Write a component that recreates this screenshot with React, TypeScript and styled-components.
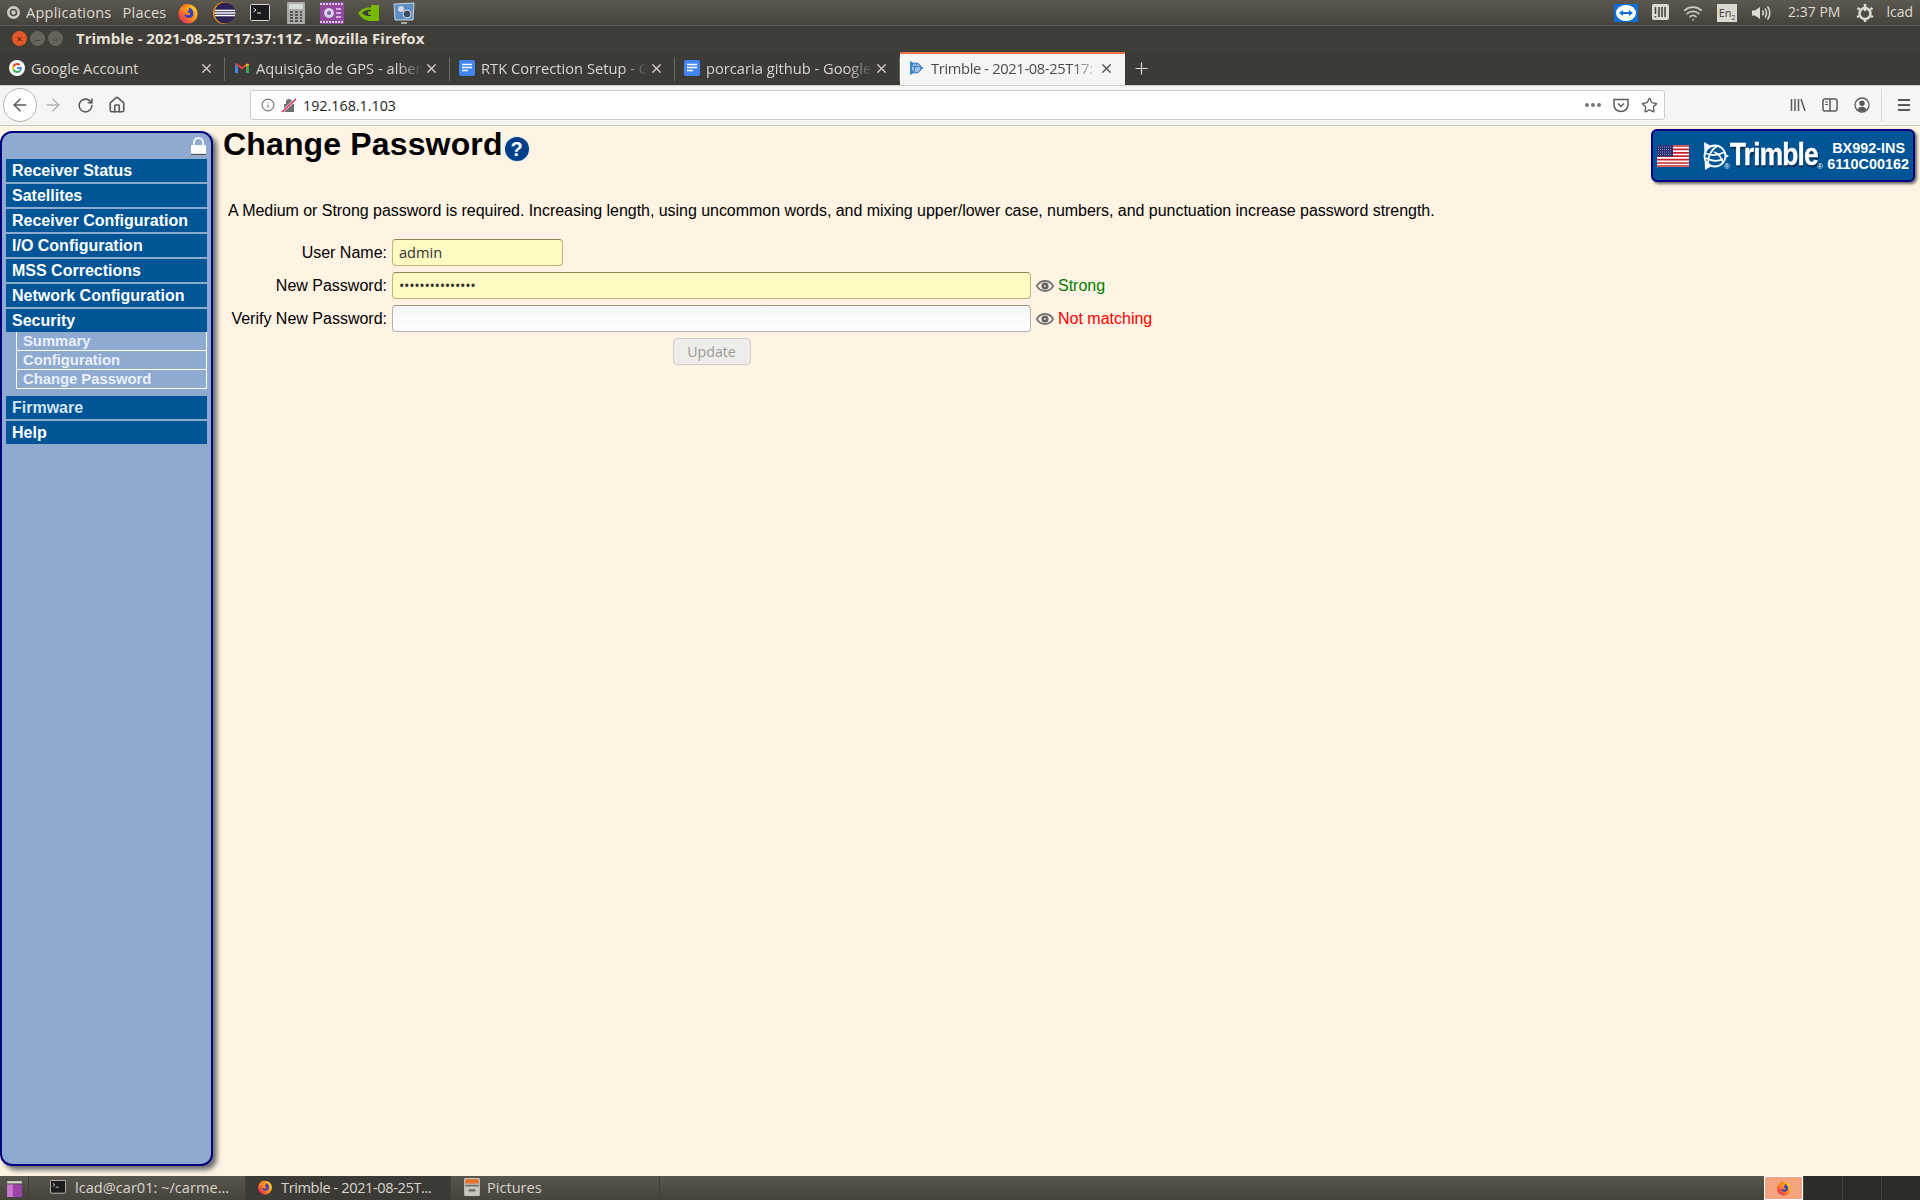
import React from "react";
import styled, { createGlobalStyle } from "styled-components";
import { ArrowLeft, ArrowRight, Home, Info, Plus, RotateCw, Star, Wifi, X } from "lucide-react";

const GlobalStyle = createGlobalStyle`
  html, body { margin: 0; padding: 0; }
  body { background: #fff3e3; overflow: hidden; }
  * { box-sizing: border-box; }
`;

const UI_FONT = `"Open Sans", "Noto Sans", sans-serif`;
const WEB_FONT = `"Liberation Sans", Arial, sans-serif`;

const Screen = styled.div`
  width: 1920px;
  height: 1200px;
  display: flex;
  flex-direction: column;
  overflow: hidden;
  font-family: ${UI_FONT};
`;

/* desktop top panel */
const TopPanel = styled.div`
  height: 26px;
  flex: none;
  display: flex;
  align-items: center;
  justify-content: space-between;
  padding: 0 7px;
  background: linear-gradient(#5c5850, #45433d);
  border-bottom: 1px solid #5e5c56;
  color: #dfdbd2;
  font-size: 14.6px;
`;

const PanelGroup = styled.div`
  display: flex;
  align-items: center;
`;

const PanelMenu = styled.span<{ $left: number }>`
  margin: 0 0 2px ${(p) => p.$left}px;
  letter-spacing: 0.2px;
`;

const Launchers = styled.div`
  display: flex;
  align-items: center;
  margin-left: 4px;
`;

const LauncherSlot = styled.span`
  width: 36px;
  display: flex;
  justify-content: center;
  align-items: center;
`;

const Tray = styled.div`
  display: flex;
  align-items: center;
  gap: 14px;
`;

const Clock = styled.span`
  margin: 0 1px 2px 3px;
  font-size: 14px;
  white-space: nowrap;
`;

const UserName = styled.span`
  margin: 0 0 2px -3px;
  font-size: 14px;
`;

/* firefox window */
const TitleBar = styled.div`
  height: 26px;
  flex: none;
  display: flex;
  align-items: center;
  padding: 0 0 2px 12px;
  background: #3f3d38;
  color: #e6e2d9;
  font-size: 15px;
  font-weight: 700;
`;

const WindowDots = styled.div`
  display: flex;
  gap: 3px;
  margin-right: 13px;
`;

const WindowDot = styled.span<{ $close?: boolean }>`
  width: 15px;
  height: 15px;
  border-radius: 50%;
  display: flex;
  align-items: center;
  justify-content: center;
  background: ${(p) => (p.$close ? "#e2572b" : "#65635c")};
  color: ${(p) => (p.$close ? "#5d2010" : "#3b3a35")};
  font-size: 11px;
  line-height: 1;
  font-weight: 400;
`;

const TabStrip = styled.div`
  height: 33px;
  flex: none;
  display: flex;
  background: #3c3b37;
`;

const Tab = styled.div<{ $active?: boolean }>`
  width: 225px;
  flex: none;
  display: flex;
  align-items: center;
  padding: ${(p) => (p.$active ? "0 11px 3px 9px" : "0 11px 1px 9px")};
  color: ${(p) => (p.$active ? "#4a4a4a" : "#d8d5cd")};
  background: ${(p) => (p.$active ? "#f5f5f4" : "transparent")};
  border-top: ${(p) => (p.$active ? "2px solid #f0704c" : "none")};
  font-size: 14.7px;
  position: relative;
  &::after {
    content: "";
    display: ${(p) => (p.$active ? "none" : "block")};
    position: absolute;
    right: 0;
    top: 5px;
    bottom: 4px;
    width: 1px;
    background: #6a6964;
  }
  & > svg {
    flex: none;
  }
`;

const TabTitle = styled.span<{ $fade?: boolean; $tight?: boolean }>`
  flex: 1;
  min-width: 0;
  margin-left: 6px;
  white-space: nowrap;
  overflow: hidden;
  letter-spacing: ${(p) => (p.$tight ? "-0.35px" : "0")};
  ${(p) =>
    p.$fade
      ? "mask-image: linear-gradient(to right, #000 85%, transparent 100%); -webkit-mask-image: linear-gradient(to right, #000 85%, transparent 100%);"
      : ""}
`;

const TabClose = styled.span`
  width: 16px;
  display: flex;
  justify-content: center;
  flex: none;
`;

const NewTab = styled.div`
  width: 32px;
  display: flex;
  align-items: center;
  justify-content: center;
  color: #e0ddd6;
`;

const Toolbar = styled.div`
  height: 41px;
  flex: none;
  display: flex;
  align-items: center;
  padding: 0 0 1px 3px;
  background: #f5f5f4;
  border-top: 1px solid #cfcfce;
  border-bottom: 1px solid #c9c8c6;
  color: #5a5a5a;
`;

const BackButton = styled.div`
  width: 34px;
  height: 34px;
  flex: none;
  display: flex;
  align-items: center;
  justify-content: center;
  border-radius: 50%;
  background: #fff;
  border: 1px solid #b3b3b3;
`;

const NavButton = styled.div<{ $dim?: boolean }>`
  width: 32px;
  flex: none;
  display: flex;
  justify-content: center;
  color: ${(p) => (p.$dim ? "#b4b4b4" : "#5a5a5a")};
`;

const UrlBar = styled.div`
  width: 1415px;
  height: 30px;
  margin-left: 117px;
  flex: none;
  display: flex;
  align-items: center;
  gap: 6px;
  padding: 0 6px 0 10px;
  background: #fff;
  border: 1px solid #cccccb;
  border-radius: 3px;
`;

const Address = styled.span`
  flex: 1;
  color: #1e1e1e;
  font-size: 14.3px;
`;

const UrlActions = styled.div`
  display: flex;
  align-items: center;
  gap: 12px;
`;

const MoreDots = styled.span`
  display: flex;
  gap: 2px;
  & > i {
    width: 4px;
    height: 4px;
    border-radius: 50%;
    background: #777;
  }
`;

const ToolActions = styled.div`
  display: flex;
  align-items: center;
  gap: 16px;
  margin-left: 125px;
`;

const ToolDivider = styled.span`
  width: 1px;
  height: 33px;
  background: #dcdcdb;
  margin: 0 -2px 0 -5px;
`;

/* receiver web page */
const PageBody = styled.div`
  flex: 1;
  min-height: 0;
  display: flex;
  background: #fff3e3;
  font-family: ${WEB_FONT};
  color: #000;
`;

const Sidebar = styled.nav`
  width: 213px;
  height: 1035px;
  margin-top: 5px;
  flex: none;
  padding: 0 4px;
  background: #8faad1;
  border: 2px solid #000080;
  border-radius: 12px;
  box-shadow: 4px 4px 5px #6e6e6e;
  display: flex;
  flex-direction: column;
`;

const LockRow = styled.div`
  height: 26px;
  flex: none;
  display: flex;
  justify-content: flex-end;
  align-items: flex-end;
  padding: 0 1px 4px 0;
`;

const MenuList = styled.div`
  display: flex;
  flex-direction: column;
  gap: 2px;
`;

const MenuItem = styled.div<{ $tint?: boolean }>`
  height: 23px;
  line-height: 23px;
  padding-left: 6px;
  background: #005596;
  color: ${(p) => (p.$tint ? "#d4e6f6" : "#fff")};
  font-size: 16px;
  font-weight: 700;
  white-space: nowrap;
`;

const SubMenu = styled.div`
  margin: -2px 0 5px 10px;
  border-left: 1px solid #fff;
  border-right: 1px solid #fff;
  display: flex;
  flex-direction: column;
`;

const SubItem = styled.div`
  height: 19px;
  line-height: 19px;
  padding-left: 6px;
  border-bottom: 1px solid #fff;
  color: #e9f0fa;
  font-size: 14.8px;
  font-weight: 700;
  white-space: nowrap;
`;

const Main = styled.main`
  flex: 1;
  min-width: 0;
  padding: 0 5px 0 10px;
`;

const Header = styled.header`
  display: flex;
  justify-content: space-between;
  align-items: flex-start;
  height: 76px;
`;

const Title = styled.h1`
  margin: 0;
  display: flex;
  align-items: flex-start;
  font-size: 32px;
  line-height: 37px;
  font-weight: 700;
  letter-spacing: 0.15px;
`;

const HelpIcon = styled.span`
  width: 24px;
  height: 24px;
  margin: 11px 0 0 2px;
  border-radius: 50%;
  background: #00408a;
  box-shadow: 0 0 0 1px #e6ebf0;
  color: #fff;
  display: flex;
  align-items: center;
  justify-content: center;
  font-size: 20px;
  line-height: 1;
  font-weight: 700;
`;

const Badge = styled.div`
  width: 264px;
  height: 53px;
  margin-top: 3px;
  display: flex;
  align-items: center;
  padding: 0 4px 0 4px;
  background: #005596;
  border: 2px solid #000080;
  border-radius: 6px;
  box-shadow: 2px 2px 3px #666;
  color: #fff;
`;

const LogoGap = styled.span`
  width: 13px;
  flex: none;
`;

const LogoWord = styled.span`
  font-size: 31px;
  line-height: 34px;
  font-weight: 700;
  letter-spacing: -1px;
  transform: scaleX(0.85);
  transform-origin: left center;
  -webkit-text-stroke: 0.4px #fff;
  text-shadow: 1px 2px 2px #00223f;
  width: 86px;
  margin-bottom: 2px;
  white-space: nowrap;
`;

const LogoMark = styled.span`
  font-size: 8px;
  align-self: flex-end;
  margin: 0 0 9px 1px;
`;

const GlobeMark = styled.span`
  font-size: 8px;
  align-self: flex-end;
  margin: 0 0 9px -6px;
`;

const ModelInfo = styled.div`
  margin-left: auto;
  text-align: right;
  font-size: 14.4px;
  line-height: 16px;
  font-weight: 700;
  & > div:first-child {
    margin-right: 4px;
  }
`;

const Intro = styled.p`
  margin: 0 0 19px 5px;
  font-size: 16px;
  line-height: 18px;
  letter-spacing: -0.04px;
`;

const Form = styled.form`
  margin-left: 5px;
  display: grid;
  grid-template-columns: 159px 1fr;
  column-gap: 5px;
  row-gap: 6px;
  align-items: center;
  font-size: 16px;
`;

const Label = styled.label`
  text-align: right;
  white-space: nowrap;
`;

const FieldRow = styled.div`
  display: flex;
  align-items: center;
`;

const Field = styled.input<{ $width: number; $filled?: boolean }>`
  width: ${(p) => p.$width}px;
  height: 27px;
  padding: 0 6px 2px;
  flex: none;
  outline: none;
  border-radius: 4px;
  border: 1px solid ${(p) => (p.$filled ? "#c4b27f" : "#b3b1ae")};
  border-top-color: ${(p) => (p.$filled ? "#96825a" : "#979693")};
  background: ${(p) => (p.$filled ? "#fffbc2" : "linear-gradient(#f5f5f5, #ffffff)")};
  color: #333;
  font-family: ${UI_FONT};
  font-size: 14.6px;
  &[type="password"] {
    letter-spacing: -0.4px;
  }
`;

const Strength = styled.span<{ $color: string }>`
  display: flex;
  align-items: center;
  margin-left: 5px;
  color: ${(p) => p.$color};
  gap: 4px;
`;

const ButtonCell = styled.div`
  grid-column: 2;
  width: 639px;
  display: flex;
  justify-content: center;
`;

const UpdateButton = styled.button`
  width: 78px;
  height: 27px;
  padding: 0;
  border: 1px solid #cfcdc9;
  border-radius: 4px;
  background: #eeedeb;
  color: #9b9a96;
  font-family: ${UI_FONT};
  font-size: 14.2px;
`;

/* desktop bottom panel */
const BottomPanel = styled.div`
  height: 24px;
  flex: none;
  display: flex;
  align-items: stretch;
  background: linear-gradient(#5a564d, #45433d);
  color: #d9d5cc;
  font-size: 14.6px;
`;

const TaskBox = styled.div<{ $width: number; $pad: number; $gap: number; $active?: boolean; $tight?: boolean }>`
  width: ${(p) => p.$width}px;
  flex: none;
  display: flex;
  align-items: center;
  gap: ${(p) => p.$gap}px;
  padding: 0 0 2px ${(p) => p.$pad}px;
  background: ${(p) => (p.$active ? "#3b3a35" : "transparent")};
  border-right: 1px solid #3f3d38;
  letter-spacing: ${(p) => (p.$tight ? "-0.4px" : "0")};
  white-space: nowrap;
  overflow: hidden;
  & > svg {
    flex: none;
  }
`;

const ShowDesktop = styled.div`
  width: 29px;
  flex: none;
  display: flex;
  align-items: center;
  justify-content: center;
  border-right: 1px solid #3f3d38;
`;

const PanelSpacer = styled.div`
  flex: 1;
`;

const WorkspaceCell = styled.div<{ $active?: boolean }>`
  width: 39px;
  flex: none;
  display: flex;
  align-items: center;
  justify-content: center;
  background: ${(p) => (p.$active ? "#f4a380" : "#2d2c29")};
  border: ${(p) => (p.$active ? "1px solid #fff" : "none")};
  border-left: ${(p) => (p.$active ? "1px solid #fff" : "1px solid #45433d")};
`;

/* drawings */
const FirefoxIcon = ({ size = 22 }: { size?: number }) => (
  <svg width={size} height={size} viewBox="0 0 24 24">
    <defs>
      <linearGradient id="ffx" x1="0.9" y1="0.1" x2="0.1" y2="0.9">
        <stop offset="0" stopColor="#ffd42a" />
        <stop offset="0.5" stopColor="#ff8a1e" />
        <stop offset="1" stopColor="#e3285c" />
      </linearGradient>
    </defs>
    <circle cx="12" cy="13" r="10.5" fill="url(#ffx)" />
    <path d="M13 6c3 .5 5 3 5 6.5S15 18 12 17.5 8 15 8.5 13l3 1.5c2 .4 3-1 2.6-2.4L11 11l2-2z" fill="#3b3fb5" />
    <path d="M7 3c-1 2-1 3 0 5 2-3 5-4 8-4-3-1.500-6-2-8-1z" fill="#ff7a18" />
  </svg>
);

const EclipseIcon = () => (
  <svg width="24" height="24" viewBox="0 0 24 24">
    <circle cx="12" cy="12" r="11" fill="#e8920e" />
    <circle cx="13" cy="12" r="10.500" fill="#2c2255" />
    <path d="M3 9.500h20M2.500 12h21M3 14.500h20" stroke="#fff" strokeWidth="1.300" />
  </svg>
);

const TerminalIcon = ({ size = 20 }: { size?: number }) => (
  <svg width={size} height={size * 0.85} viewBox="0 0 20 17">
    <rect x=".5" y=".5" width="19" height="16" rx="1" fill="#1b1b1b" stroke="#d8d8d8" />
    <path d="M3.500 4l2.500 2-2.500 2M7 9h4" stroke="#eee" strokeWidth="1" fill="none" />
  </svg>
);

const CalculatorIcon = () => (
  <svg width="18" height="22" viewBox="0 0 18 22">
    <rect width="18" height="22" rx="1" fill="#a9a9a5" />
    <rect x="2" y="2" width="14" height="5" fill="#d9dbd6" />
    <path d="M3 10h3M8 10h3M13 10h2M3 13h3M8 13h3M13 13h2M3 16h3M8 16h3M13 16h2M3 19h3M8 19h3M13 19h2" stroke="#55554f" strokeWidth="2" />
  </svg>
);

const MediaIcon = () => (
  <svg width="24" height="22" viewBox="0 0 24 22">
    <rect width="24" height="22" rx="1" fill="#8f4aa0" />
    <path d="M0 2h24M0 20h24" stroke="#d8c8dc" strokeWidth="2" strokeDasharray="2 1" />
    <circle cx="9" cy="11" r="5" fill="#d9cfe6" />
    <circle cx="9" cy="11" r="2" fill="#7b5aa6" />
    <path d="M16 7h5M16 11h5M16 15h5" stroke="#d7a9e0" strokeWidth="2" />
  </svg>
);

const NvidiaIcon = () => (
  <svg width="22" height="16" viewBox="0 0 22 16">
    <path d="M1 8c4-5 9-6 13-5.500V0h8v16h-8c-5 0-9-2-13-8z" fill="#76b900" />
    <path d="M5 8c3-3 6-3.500 9-3v6C11 11.500 8 11 5 8z" fill="#3f3d38" />
    <circle cx="13" cy="8" r="2" fill="#76b900" />
  </svg>
);

const ControlIcon = () => (
  <svg width="22" height="22" viewBox="0 0 22 22">
    <path d="M1 2l20-1-1 17H2z" fill="#5e8fc4" stroke="#c8d4e0" />
    <circle cx="8" cy="7" r="3" fill="#d7d7d7" />
    <circle cx="14" cy="12" r="4" fill="#3a4d66" stroke="#ddd" />
    <path d="M8 21h6" stroke="#ccc" strokeWidth="1.500" />
  </svg>
);

const TeamViewerIcon = () => (
  <svg width="24" height="18" viewBox="0 0 24 18">
    <rect width="24" height="18" fill="#0e6fd6" />
    <ellipse cx="12" cy="9" rx="10" ry="8" fill="#fff" />
    <path d="M5 9l4-3v2h6V6l4 3-4 3v-2H9v2z" fill="#0e6fd6" />
  </svg>
);

const MeterIcon = () => (
  <svg width="17" height="17" viewBox="0 0 17 17">
    <rect width="17" height="16" rx="2" fill="#dcd9d0" />
    <path d="M3.500 3v7M3.500 12v1.500M7 3v10M10 3v10M13 3v10" stroke="#3f3d38" strokeWidth="1.500" />
  </svg>
);

const KeyboardLayout = styled.span`
  width: 20px;
  height: 18px;
  background: #dcd9d0;
  color: #3f3d38;
  font-size: 11px;
  line-height: 17px;
  text-align: center;
  white-space: nowrap;
  & > sub {
    font-size: 7px;
    line-height: 0;
  }
`;

const SpeakerIcon = () => (
  <svg width="20" height="18" viewBox="0 0 20 18" fill="none" stroke="#dfdbd2" strokeWidth="1.500">
    <path d="M1 6.500h3L9 3v12l-5-3.500H1z" fill="#dfdbd2" stroke="none" />
    <path d="M11.500 6.500c1 1.500 1 3.500 0 5M14 4.500c2 2.500 2 6.500 0 9M16.500 2.500c3 3.500 3 9.500 0 13" />
  </svg>
);

const GearPower = () => (
  <svg width="20" height="20" viewBox="0 0 20 20" fill="none" stroke="#dfdbd2">
    <circle cx="10" cy="10.500" r="5.500" strokeWidth="2.500" />
    <path d="M10 1v7M2.500 5l2 1.500M17.500 5l-2 1.500M2 14l2-1M18 14l-2-1M10 16v3" strokeWidth="2.500" />
  </svg>
);

const GoogleIcon = () => (
  <svg width="16" height="16" viewBox="0 0 16 16">
    <circle cx="8" cy="8" r="8" fill="#fff" />
    <path d="M12.800 8.100c0-.4 0-.7-.1-1H8v1.900h2.700c-.1.700-.5 1.200-1 1.500l1.600 1.200c.9-.9 1.500-2.100 1.500-3.600z" fill="#4285f4" />
    <path d="M8 13c1.300 0 2.400-.4 3.300-1.200l-1.600-1.200c-.4.300-1 .5-1.700.5-1.300 0-2.400-.9-2.800-2L3.600 10.300C4.400 11.900 6.100 13 8 13z" fill="#34a853" />
    <path d="M5.200 9.100c-.2-.7-.2-1.400 0-2.100L3.600 5.700c-.7 1.400-.7 3.200 0 4.600z" fill="#fbbc05" />
    <path d="M8 5c.7 0 1.400.3 1.900.7l1.400-1.400C10.400 3.500 9.300 3 8 3 6.100 3 4.400 4.100 3.600 5.700L5.200 7c.4-1.200 1.500-2 2.800-2z" fill="#ea4335" />
  </svg>
);

const GmailIcon = () => (
  <svg width="16" height="16" viewBox="0 0 16 16">
    <path d="M1 4v9h3V7z" fill="#4285f4" />
    <path d="M12 7v6h3V4z" fill="#34a853" />
    <path d="M1 4l7 5.500L15 4l-1.500-1L8 7 2.500 3z" fill="#ea4335" />
    <path d="M12 4v3l3-2.500V4z" fill="#fbbc05" />
  </svg>
);

const DocsIcon = () => (
  <svg width="16" height="16" viewBox="0 0 16 16">
    <rect width="16" height="16" rx="2" fill="#4285f4" />
    <path d="M3 4.500h10M3 7.500h10M3 10.500h6" stroke="#fff" strokeWidth="1.500" />
  </svg>
);

const TrimbleFavicon = () => (
  <svg width="16" height="16" viewBox="0 0 16 16" fill="none">
    <path d="M1 1l14 7-14 7z" fill="#3f86c9" />
    <circle cx="7" cy="8" r="5" fill="#9cc3e6" stroke="#2c74b8" />
    <path d="M3 6c3 1 6 1 8 0M5 12c0-3 1-6 3-8" stroke="#2c74b8" />
  </svg>
);

const InsecureLock = () => (
  <svg width="16" height="16" viewBox="0 0 16 16">
    <path d="M5 7V5a3 3 0 0 1 6 0v2h2v8H3V7z" fill="#6f6f6f" />
    <path d="M1 15L15 2" stroke="#fff" strokeWidth="2.500" />
    <path d="M1 15L15 2" stroke="#e0254d" strokeWidth="1.500" />
  </svg>
);

const PocketIcon = () => (
  <svg width="16" height="16" viewBox="0 0 16 16" fill="none" stroke="#5a5a5a" strokeWidth="1.500">
    <path d="M1 2.500h14V8a7 6.500 0 0 1-14 0z" />
    <path d="M5 6.500l3 3 3-3" />
  </svg>
);

const LibraryIcon = () => (
  <svg width="16" height="16" viewBox="0 0 16 16" fill="none" stroke="#5a5a5a" strokeWidth="1.500">
    <path d="M1.500 2v12M5 2v12M8.500 2v12M11 2l4 12" />
  </svg>
);

const SidebarIcon = () => (
  <svg width="16" height="16" viewBox="0 0 16 16" fill="none" stroke="#5a5a5a" strokeWidth="1.500">
    <rect x="1" y="2" width="14" height="12" rx="2" />
    <path d="M8 2v12" />
    <path d="M3 5h3M3 7.500h3" strokeWidth="1" />
  </svg>
);

const AccountIcon = () => (
  <svg width="16" height="16" viewBox="0 0 16 16">
    <circle cx="8" cy="8" r="7" fill="none" stroke="#5a5a5a" strokeWidth="1.300" />
    <circle cx="8" cy="6.200" r="2.700" fill="#5a5a5a" />
    <path d="M3.500 12.500c1-2 3-2.700 4.500-2.700s3.500.7 4.500 2.700a6 6 0 0 1-9 0z" fill="#5a5a5a" />
  </svg>
);

const BurgerIcon = () => (
  <svg width="16" height="14" viewBox="0 0 16 14" stroke="#5a5a5a" strokeWidth="2">
    <path d="M2 2h12M2 7h12M2 12h12" />
  </svg>
);

const PadLock = () => (
  <svg width="15" height="18" viewBox="0 0 15 18">
    <path d="M3 8V5.500a4.500 4.500 0 0 1 9 0V8" fill="none" stroke="#f2f3f5" strokeWidth="2" />
    <rect y="8" width="15" height="10" rx="1" fill="#fff" />
    <rect y="16.800" width="15" height="1.200" fill="#555" />
  </svg>
);

const EyeIcon = () => (
  <svg width="18" height="12" viewBox="0 0 18 12">
    <path d="M.8 6C3 2.200 6 1 9 1s6 1.200 8.200 5C15 9.800 12 11 9 11S3 9.800.8 6z" fill="none" stroke="#777" strokeWidth="1.800" />
    <circle cx="9" cy="6" r="3.600" fill="#666" />
    <circle cx="9" cy="6" r="1" fill="#ddd" />
  </svg>
);

const FlagIcon = () => (
  <svg width="32" height="22" viewBox="0 0 32 22">
    <rect width="32" height="22" fill="#fff" />
    <path d="M0 1h32M0 4.400h32M0 7.800h32M0 11.200h32M0 14.600h32M0 18h32M0 21h32" stroke="#c8202f" strokeWidth="1.700" />
    <rect width="16" height="11.500" fill="#2b2f73" />
    <path d="M1 2h14M1 4.500h14M1 7h14M1 9.500h14" stroke="#aab" strokeWidth=".8" strokeDasharray="1 1" />
  </svg>
);

const TrimbleGlobe = () => (
  <svg width="28" height="30" viewBox="0 0 28 30" fill="none">
    <path d="M2 1l25 14L3 29z" fill="#f3f6fa" />
    <circle cx="13" cy="15" r="10.500" fill="#005596" stroke="#fff" strokeWidth="1.800" />
    <path d="M3 12c6 3 14 2 20-1M6 23c0-7 3-14 9-18M12 11c4 1 8 6 9 11M4 17c5 3 11 4 17 1" stroke="#fff" strokeWidth="1.700" />
  </svg>
);

const PicturesIcon = () => (
  <svg width="16" height="18" viewBox="0 0 14 16">
    <rect width="14" height="16" rx="1" fill="#c9c6be" />
    <rect x="1" y="1" width="12" height="4" fill="#e0702c" />
    <rect x="1" y="6" width="12" height="1.500" fill="#6b6a64" />
    <rect x="4" y="10" width="6" height="2" fill="#6b6a64" />
  </svg>
);

const ShowDesktopIcon = () => (
  <svg width="15" height="17" viewBox="0 0 13 15">
    <rect y="1" width="13" height="2" fill="#d8d4c9" />
    <rect y="4" width="13" height="11" fill="#9c45a8" />
    <rect x="0" y="4" width="5" height="11" fill="#c77bd0" />
  </svg>
);

const launchers = [
  <FirefoxIcon key="firefox" />,
  <EclipseIcon key="eclipse" />,
  <TerminalIcon key="terminal" />,
  <CalculatorIcon key="calc" />,
  <MediaIcon key="media" />,
  <NvidiaIcon key="nvidia" />,
  <ControlIcon key="control" />,
];

const tabs = [
  { title: "Google Account", icon: <GoogleIcon /> },
  { title: "Aquisição de GPS - alber", icon: <GmailIcon />, fade: true },
  { title: "RTK Correction Setup - G", icon: <DocsIcon />, fade: true },
  { title: "porcaria github - Google", icon: <DocsIcon />, fade: true },
  { title: "Trimble - 2021-08-25T17:", icon: <TrimbleFavicon />, fade: true, active: true },
];

const menuTop = [
  "Receiver Status",
  "Satellites",
  "Receiver Configuration",
  "I/O Configuration",
  "MSS Corrections",
  "Network Configuration",
  "Security",
];

const App = () => {
  return (
    <Screen>
      <GlobalStyle />
      <TopPanel>
        <PanelGroup>
          <svg width="13" height="13" viewBox="0 0 13 13">
            <circle cx="6.500" cy="6.500" r="6.500" fill="#cfcbc2" />
            <circle cx="6.500" cy="6.500" r="3" fill="none" stroke="#4f4c45" strokeWidth="1.600" />
          </svg>
          <PanelMenu $left={6}>Applications</PanelMenu>
          <PanelMenu $left={11}>Places</PanelMenu>
          <Launchers>
            {launchers.map((icon) => (
              <LauncherSlot key={icon.key}>{icon}</LauncherSlot>
            ))}
          </Launchers>
        </PanelGroup>
        <Tray>
          <TeamViewerIcon />
          <MeterIcon />
          <Wifi size={20} color="#cfcbc2" />
          <KeyboardLayout>
            En<sub>2</sub>
          </KeyboardLayout>
          <SpeakerIcon />
          <Clock>2:37 PM</Clock>
          <GearPower />
          <UserName>lcad</UserName>
        </Tray>
      </TopPanel>

      <TitleBar>
        <WindowDots>
          <WindowDot $close>×</WindowDot>
          <WindowDot>–</WindowDot>
          <WindowDot>▫</WindowDot>
        </WindowDots>
        Trimble - 2021-08-25T17:37:11Z - Mozilla Firefox
      </TitleBar>

      <TabStrip>
        {tabs.map((tab) => (
          <Tab key={tab.title} $active={tab.active}>
            {tab.icon}
            <TabTitle $fade={tab.fade} $tight={tab.active}>
              {tab.title}
            </TabTitle>
            <TabClose>
              <X size={15} />
            </TabClose>
          </Tab>
        ))}
        <NewTab>
          <Plus size={19} strokeWidth={1.5} />
        </NewTab>
      </TabStrip>

      <Toolbar>
        <BackButton>
          <ArrowLeft size={20} strokeWidth={1.8} />
        </BackButton>
        <NavButton $dim>
          <ArrowRight size={20} strokeWidth={1.8} />
        </NavButton>
        <NavButton>
          <RotateCw size={17} strokeWidth={2.2} />
        </NavButton>
        <NavButton>
          <Home size={18} strokeWidth={2.2} />
        </NavButton>
        <UrlBar>
          <Info size={14} color="#777" />
          <InsecureLock />
          <Address>192.168.1.103</Address>
          <UrlActions>
            <MoreDots>
              <i />
              <i />
              <i />
            </MoreDots>
            <PocketIcon />
            <Star size={17} strokeWidth={1.8} color="#5a5a5a" />
          </UrlActions>
        </UrlBar>
        <ToolActions>
          <LibraryIcon />
          <SidebarIcon />
          <AccountIcon />
          <ToolDivider />
          <BurgerIcon />
        </ToolActions>
      </Toolbar>

      <PageBody>
        <Sidebar>
          <LockRow>
            <PadLock />
          </LockRow>
          <MenuList>
            {menuTop.map((item) => (
              <MenuItem key={item}>{item}</MenuItem>
            ))}
            <SubMenu>
              <SubItem>Summary</SubItem>
              <SubItem>Configuration</SubItem>
              <SubItem>Change Password</SubItem>
            </SubMenu>
            <MenuItem $tint>Firmware</MenuItem>
            <MenuItem>Help</MenuItem>
          </MenuList>
        </Sidebar>

        <Main>
          <Header>
            <Title>
              Change Password
              <HelpIcon>?</HelpIcon>
            </Title>
            <Badge>
              <FlagIcon />
              <LogoGap />
              <TrimbleGlobe />
              <GlobeMark>®</GlobeMark>
              <LogoWord>Trimble</LogoWord>
              <LogoMark>®</LogoMark>
              <ModelInfo>
                <div>BX992-INS</div>
                <div>6110C00162</div>
              </ModelInfo>
            </Badge>
          </Header>

          <Intro>
            A Medium or Strong password is required. Increasing length, using uncommon words, and mixing upper/lower
            case, numbers, and punctuation increase password strength.
          </Intro>

          <Form>
            <Label>User Name:</Label>
            <FieldRow>
              <Field $width={171} $filled defaultValue="admin" readOnly />
            </FieldRow>
            <Label>New Password:</Label>
            <FieldRow>
              <Field $width={639} $filled type="password" defaultValue="aaaaaaaaaaaaaaa" readOnly />
              <Strength $color="#008000">
                <EyeIcon />
                Strong
              </Strength>
            </FieldRow>
            <Label>Verify New Password:</Label>
            <FieldRow>
              <Field $width={639} type="password" readOnly />
              <Strength $color="#ff0000">
                <EyeIcon />
                Not matching
              </Strength>
            </FieldRow>
            <ButtonCell>
              <UpdateButton type="button" disabled>
                Update
              </UpdateButton>
            </ButtonCell>
          </Form>
        </Main>
      </PageBody>

      <BottomPanel>
        <ShowDesktop>
          <ShowDesktopIcon />
        </ShowDesktop>
        <TaskBox $width={217} $pad={21} $gap={9}>
          <TerminalIcon size={16} />
          lcad@car01: ~/carme...
        </TaskBox>
        <TaskBox $width={205} $pad={11} $gap={8} $active $tight>
          <FirefoxIcon size={16} />
          Trimble - 2021-08-25T...
        </TaskBox>
        <TaskBox $width={209} $pad={13} $gap={7}>
          <PicturesIcon />
          Pictures
        </TaskBox>
        <PanelSpacer />
        <WorkspaceCell $active>
          <FirefoxIcon size={16} />
        </WorkspaceCell>
        <WorkspaceCell />
        <WorkspaceCell />
        <WorkspaceCell />
      </BottomPanel>
    </Screen>
  );
};

export default App;
